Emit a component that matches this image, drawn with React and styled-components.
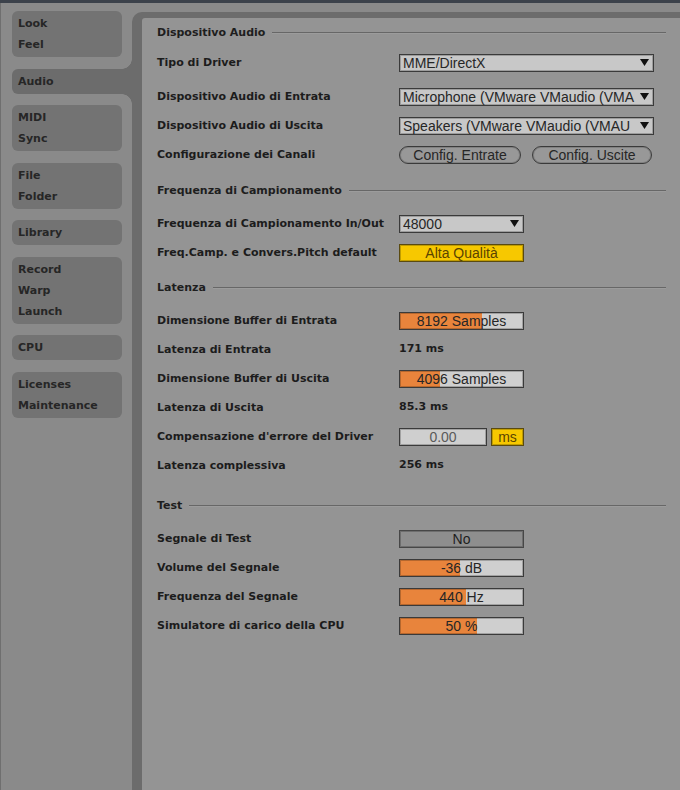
import styled, { createGlobalStyle } from 'styled-components';

const GlobalStyle = createGlobalStyle`
  html, body {
    margin: 0;
    padding: 0;
    background: #8a8a8a;
  }
  body {
    font-family: "DejaVu Sans", Verdana, sans-serif;
  }
`

const Window = styled.div`
    width: 680px;
    height: 790px;
    display: flex;
    flex-direction: column;
    overflow: hidden;
    background: #8a8a8a;
`

const TopEdge = styled.div`
    height: 3px;
    flex-shrink: 0;
    background: #3c424b;
`

const Body = styled.div`
    flex: 1;
    display: flex;
    min-height: 0;
`

const Sidebar = styled.div`
    width: 132px;
    flex-shrink: 0;
    box-sizing: border-box;
    padding-top: 8px;
    display: flex;
    flex-direction: column;
    gap: 11.5px;
    border-left: 1px solid #6f6f6f;
`

const Tab = styled.div`
    position: relative;
    margin-left: 11px;
    margin-right: ${p => p.$active ? '0' : '10px'};
    padding: 2px 6px;
    border-radius: ${p => p.$active ? '6px 0 0 6px' : '6px'};
    background: ${p => p.$active ? '#6c6c6c' : '#737373'};
    font-size: 11px;
    font-weight: bold;
    line-height: 21px;
    color: #262626;

    ${p => p.$active && `
    &::before, &::after {
        content: '';
        position: absolute;
        right: 0;
        width: 10px;
        height: 10px;
    }
    &::before {
        top: -10px;
        background: radial-gradient(circle at 0 0, transparent 9.5px, #6c6c6c 10px);
    }
    &::after {
        bottom: -10px;
        background: radial-gradient(circle at 0 100%, transparent 9.5px, #6c6c6c 10px);
    }
    `}
`

const Frame = styled.div`
    flex: 1;
    display: flex;
    margin-top: 9px;
    padding: 6px 0 0 10px;
    background: #6c6c6c;
    border-top-left-radius: 10px;
`

const Panel = styled.div`
    flex: 1;
    padding: 4px 14px 0 15px;
    background: #949494;
    border-top-left-radius: 3px;
`

const Section = styled.div`
    margin-top: ${p => p.$top}px;
`

const SectionHead = styled.div`
    height: 20px;
    margin-bottom: ${p => p.$gap ?? 9}px;
    display: flex;
    align-items: center;
    gap: 7px;
    font-size: 11px;
    font-weight: bold;
    color: #1e1e1e;

    &::after {
        content: '';
        flex: 1;
        height: 1px;
        background: #676767;
        box-shadow: 0 1px 0 #9c9c9c;
    }
`

const Row = styled.div`
    height: 29px;
    margin-bottom: ${p => p.$after || 0}px;
    display: grid;
    grid-template-columns: 242px auto;
    align-items: center;
`

const Label = styled.div`
    font-size: 11px;
    font-weight: bold;
    color: #1c1c1c;
    white-space: nowrap;
`

const Controls = styled.div`
    display: flex;
    align-items: center;
    gap: ${p => p.$gap || 0}px;
`

const Field = styled.div`
    width: ${p => p.$w}px;
    height: 18px;
    box-sizing: border-box;
    display: flex;
    align-items: center;
    font-family: "Liberation Sans", Arial, sans-serif;
    font-size: 14px;
    color: #262626;
    white-space: nowrap;
    overflow: hidden;
    border: 1px solid #3a3a3a;
    box-shadow: inset 0 0 0 1px rgba(0, 0, 0, 0.22);
`

const Select = styled(Field)`
    padding: 0 4px 0 3px;
    gap: 3px;
    background: #c8c8c8;

    span {
        flex: 1;
        overflow: hidden;
    }
`

const Bar = styled(Field)`
    justify-content: center;
    background: linear-gradient(to right, #e8843c ${p => p.$fill}%, #cfcfcf ${p => p.$fill}%);
`

const Toggle = styled(Field)`
    justify-content: center;
    background: ${p => p.$yellow ? '#f7c800' : '#8e8e8e'};
    color: ${p => p.$yellow ? '#5a4400' : '#1e1e1e'};
    border-color: ${p => p.$yellow ? '#5a4a10' : '#474747'};
`

const NumberBox = styled(Field)`
    justify-content: center;
    background: #cfcfcf;
    color: #5a5a5a;
`

const Pill = styled.button`
    width: ${p => p.$w}px;
    height: 18px;
    padding: 0;
    border: 1px solid #3a3a3a;
    border-radius: 9px;
    background: #989898;
    box-shadow: inset 0 0 0 1px rgba(0, 0, 0, 0.15);
    font-family: "Liberation Sans", Arial, sans-serif;
    font-size: 14px;
    color: #262626;
`

const Value = styled.div`
    font-size: 11px;
    font-weight: bold;
    color: #1c1c1c;
    margin-top: -3px;
`

const Arrow = () => (
    <svg width="9" height="7" viewBox="0 0 9 7">
        <polygon points="0,0 9,0 4.5,7" fill="#111" />
    </svg>
)

const tabs = [
    ['Look', 'Feel'],
    ['Audio'],
    ['MIDI', 'Sync'],
    ['File', 'Folder'],
    ['Library'],
    ['Record', 'Warp', 'Launch'],
    ['CPU'],
    ['Licenses', 'Maintenance'],
]

const testBars = [
    ['Volume del Segnale', '-36 dB', 48.5],
    ['Frequenza del Segnale', '440 Hz', 54],
    ['Simulatore di carico della CPU', '50 %', 62.5],
]

export default function App() {
    return (
        <>
        <GlobalStyle />
        <Window>
            <TopEdge />
            <Body>
                <Sidebar>
                    {tabs.map(lines => (
                        <Tab key={lines[0]} $active={lines[0] === 'Audio'}>
                            {lines.map(l => <div key={l}>{l}</div>)}
                        </Tab>
                    ))}
                </Sidebar>
                <Frame>
                    <Panel>
                        <Section $top={0}>
                            <SectionHead $gap={6}>Dispositivo Audio</SectionHead>
                            <Row $after={5}>
                                <Label>Tipo di Driver</Label>
                                <Select $w={255}><span>MME/DirectX</span><Arrow /></Select>
                            </Row>
                            <Row>
                                <Label>Dispositivo Audio di Entrata</Label>
                                <Select $w={255}><span>Microphone (VMware VMaudio (VMA</span><Arrow /></Select>
                            </Row>
                            <Row>
                                <Label>Dispositivo Audio di Uscita</Label>
                                <Select $w={255}><span>Speakers (VMware VMaudio (VMAU</span><Arrow /></Select>
                            </Row>
                            <Row>
                                <Label>Configurazione dei Canali</Label>
                                <Controls $gap={11}>
                                    <Pill $w={122}>Config. Entrate</Pill>
                                    <Pill $w={120}>Config. Uscite</Pill>
                                </Controls>
                            </Row>
                        </Section>

                        <Section $top={11}>
                            <SectionHead>Frequenza di Campionamento</SectionHead>
                            <Row>
                                <Label>Frequenza di Campionamento In/Out</Label>
                                <Select $w={125}><span>48000</span><Arrow /></Select>
                            </Row>
                            <Row>
                                <Label>Freq.Camp. e Convers.Pitch default</Label>
                                <Toggle $w={125} $yellow>Alta Qualità</Toggle>
                            </Row>
                        </Section>

                        <Section $top={10}>
                            <SectionHead>Latenza</SectionHead>
                            <Row>
                                <Label>Dimensione Buffer di Entrata</Label>
                                <Bar $w={125} $fill={66.5}>8192 Samples</Bar>
                            </Row>
                            <Row>
                                <Label>Latenza di Entrata</Label>
                                <Value>171 ms</Value>
                            </Row>
                            <Row>
                                <Label>Dimensione Buffer di Uscita</Label>
                                <Bar $w={125} $fill={32.5}>4096 Samples</Bar>
                            </Row>
                            <Row>
                                <Label>Latenza di Uscita</Label>
                                <Value>85.3 ms</Value>
                            </Row>
                            <Row>
                                <Label>Compensazione d'errore del Driver</Label>
                                <Controls $gap={4}>
                                    <NumberBox $w={88}>0.00</NumberBox>
                                    <Toggle $w={33} $yellow>ms</Toggle>
                                </Controls>
                            </Row>
                            <Row>
                                <Label>Latenza complessiva</Label>
                                <Value>256 ms</Value>
                            </Row>
                        </Section>

                        <Section $top={15}>
                            <SectionHead>Test</SectionHead>
                            <Row>
                                <Label>Segnale di Test</Label>
                                <Toggle $w={125}>No</Toggle>
                            </Row>
                            {testBars.map(([label, text, fill]) => (
                                <Row key={label}>
                                    <Label>{label}</Label>
                                    <Bar $w={125} $fill={fill}>{text}</Bar>
                                </Row>
                            ))}
                        </Section>
                    </Panel>
                </Frame>
            </Body>
        </Window>
        </>
    )
}
